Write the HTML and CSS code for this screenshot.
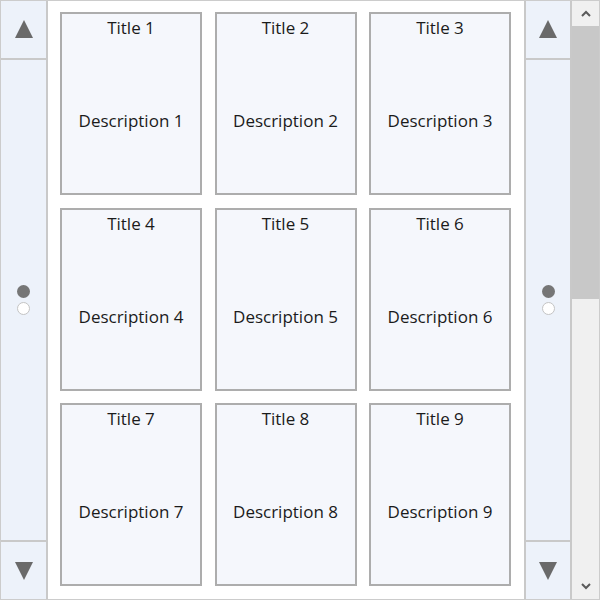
FILE: index.html
```html
<!DOCTYPE html>
<html>
<head>
<meta charset="utf-8">
<link rel="stylesheet" href="styles.css">
</head>
<body>
<div class="root">
  <div class="side side-left">
    <div class="nav-btn nav-up">
      <svg width="18" height="18" viewBox="0 0 18 18"><polygon points="9,0 18,18 0,18" fill="#6a6a6a"/></svg>
    </div>
    <div class="dots">
      <span class="dot dot-on"></span>
      <span class="dot dot-off"></span>
    </div>
    <div class="nav-btn nav-down">
      <svg width="18" height="18" viewBox="0 0 18 18"><polygon points="0,0 18,0 9,18" fill="#6a6a6a"/></svg>
    </div>
  </div>
  <div class="grid">
    <div class="card"><div class="title">Title 1</div><div class="desc">Description 1</div></div>
    <div class="card"><div class="title">Title 2</div><div class="desc">Description 2</div></div>
    <div class="card"><div class="title">Title 3</div><div class="desc">Description 3</div></div>
    <div class="card"><div class="title">Title 4</div><div class="desc">Description 4</div></div>
    <div class="card"><div class="title">Title 5</div><div class="desc">Description 5</div></div>
    <div class="card"><div class="title">Title 6</div><div class="desc">Description 6</div></div>
    <div class="card"><div class="title">Title 7</div><div class="desc">Description 7</div></div>
    <div class="card"><div class="title">Title 8</div><div class="desc">Description 8</div></div>
    <div class="card"><div class="title">Title 9</div><div class="desc">Description 9</div></div>
  </div>
  <div class="side side-right">
    <div class="nav-btn nav-up">
      <svg width="18" height="18" viewBox="0 0 18 18"><polygon points="9,0 18,18 0,18" fill="#6a6a6a"/></svg>
    </div>
    <div class="dots">
      <span class="dot dot-on"></span>
      <span class="dot dot-off"></span>
    </div>
    <div class="nav-btn nav-down">
      <svg width="18" height="18" viewBox="0 0 18 18"><polygon points="0,0 18,0 9,18" fill="#6a6a6a"/></svg>
    </div>
  </div>
  <div class="scrollbar">
    <div class="sb-btn">
      <svg width="10" height="7" viewBox="0 0 10 7"><polyline points="1,6 5,2 9,6" fill="none" stroke="#5a5a5a" stroke-width="2"/></svg>
    </div>
    <div class="sb-thumb"></div>
    <div class="sb-track"></div>
    <div class="sb-btn">
      <svg width="10" height="7" viewBox="0 0 10 7"><polyline points="1,1 5,5 9,1" fill="none" stroke="#5a5a5a" stroke-width="2"/></svg>
    </div>
  </div>
</div>
</body>
</html>
```
FILE: styles.css
```css
html, body {
  margin: 0;
  padding: 0;
  background: #ffffff;
}

.root {
  box-sizing: border-box;
  width: 600px;
  height: 600px;
  border: 1px solid #cccccc;
  display: flex;
  background: #ffffff;
  font-family: "Open Sans", "Noto Sans", sans-serif;
  color: #1b1b1b;
}

.side {
  box-sizing: border-box;
  display: flex;
  flex-direction: column;
  background: #edf2fa;
  flex: none;
}

.side-left {
  width: 47px;
  border-right: 2px solid #c9c9c9;
}

.side-right {
  width: 48px;
  border-left: 2px solid #c9c9c9;
  border-right: 2px solid #c9c9c9;
}

.nav-btn {
  box-sizing: border-box;
  height: 59px;
  display: flex;
  align-items: center;
  justify-content: center;
  flex: none;
}

.nav-up {
  border-bottom: 2px solid #c9c9c9;
  padding-bottom: 1px;
}

.nav-down {
  border-top: 2px solid #c9c9c9;
}

.dots {
  flex: 1;
  display: flex;
  flex-direction: column;
  align-items: center;
  justify-content: center;
  gap: 4px;
}

.dot {
  box-sizing: border-box;
  width: 13px;
  height: 13px;
  border-radius: 50%;
}

.dot-on {
  background: #767676;
}

.dot-off {
  background: #ffffff;
  border: 1.5px solid #c4c4c4;
}

.grid {
  box-sizing: border-box;
  flex: 1;
  display: grid;
  grid-template-columns: repeat(3, 1fr);
  grid-template-rows: repeat(3, 1fr);
  column-gap: 12.5px;
  row-gap: 12.5px;
  padding: 11px 13px 13px 12px;
  background: #ffffff;
}

.card {
  box-sizing: border-box;
  border: 2px solid #adadad;
  background: #f5f7fc;
  display: flex;
  flex-direction: column;
  font-size: 17px;
  min-height: 0;
}

.title {
  line-height: 24px;
  padding-top: 2px;
  text-align: center;
}

.desc {
  flex: 1;
  display: flex;
  align-items: center;
  justify-content: center;
  line-height: 24px;
  padding-top: 9px;
}

.scrollbar {
  flex: none;
  width: 27px;
  display: flex;
  flex-direction: column;
  background: #f0f0f0;
}

.sb-btn {
  height: 25px;
  display: flex;
  align-items: center;
  justify-content: center;
  flex: none;
}

.sb-thumb {
  height: 273px;
  background: #c8c8c8;
  flex: none;
}

.sb-track {
  flex: 1;
}
```
